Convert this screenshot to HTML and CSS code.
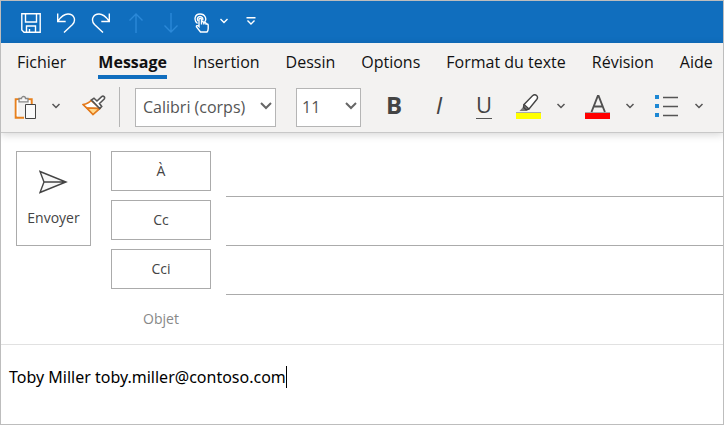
FILE: index.html
```html
<!DOCTYPE html>
<html lang="fr">
<head>
<meta charset="utf-8">
<title>Message</title>
<link rel="stylesheet" href="styles.css">
</head>
<body>
<div class="window">
  <header class="titlebar">
    <button class="quick" aria-label="Enregistrer"><svg width="20" height="20" viewBox="0 0 20 20"><path d="M.8.8h18.4v18.4H3L.8 17zM4.500 1v8h11V1M5.500 19v-6h9v6M8.500 19v-3"/></svg></button>
    <button class="quick" aria-label="Annuler"><svg width="20" height="20" viewBox="0 0 20 20"><path d="M1.700.5v8h8M2 8C5.500 3 9 1 12 1c6 0 8.500 6 4.500 10.500L8 19.500"/></svg></button>
    <button class="quick" aria-label="Rétablir"><svg width="20" height="20" viewBox="0 0 20 20"><path d="M18.300.5v8h-8M18 8C14.500 3 11 1 8 1 2 1-.5 7 3.500 11.500l8.500 8"/></svg></button>
    <button class="quick dim" aria-label="Élément précédent"><svg width="20" height="20" viewBox="0 0 20 20"><path d="M10 20V1M3.500 7.500 10 1l6.500 6.500"/></svg></button>
    <button class="quick dim" aria-label="Élément suivant"><svg width="20" height="20" viewBox="0 0 20 20"><path d="M10 0v19M3.500 12.500 10 19l6.500-6.500"/></svg></button>
    <button class="quick touch" aria-label="Mode tactile"><svg width="16" height="20" viewBox="0 0 16 20"><path d="M3.500 10.500C-.5 7.500.5 1 6 1s7 5.500 4.500 8M4.200 8C2.500 5.500 4 3.500 6 3.500S9.500 5.500 8.500 7.500"/><path d="M5 13.500V6.500c0-1.700 2.500-1.700 2.500 0v5-2c0-1.200 2.300-1.200 2.300.3v1.700-1.200c0-1.200 2.200-1 2.200.3v1.200c0-1.200 2.200-.9 2.200.3v3.400c0 2-1.200 3.500-1.200 3.500H6.500L2.500 14c-.5-1.500 1-2 2.500-.5z"/></svg></button>
    <button class="quick small" aria-label="Options du mode tactile"><svg width="10" height="6" viewBox="0 0 10 6"><path d="M1.500 1 5 4.500 8.500 1"/></svg></button>
    <button class="quick small" aria-label="Personnaliser"><svg width="10" height="8" viewBox="0 0 10 8"><path d="M.5.700h9M1.500 3.500 5 7l3.500-3.500"/></svg></button>
  </header>
  <div class="ribbon">
    <nav class="tabs">
      <a href="#">Fichier</a>
      <a href="#" class="active">Message</a>
      <a href="#">Insertion</a>
      <a href="#">Dessin</a>
      <a href="#">Options</a>
      <a href="#">Format du texte</a>
      <a href="#">Révision</a>
      <a href="#">Aide</a>
    </nav>
    <div class="tools">
      <div class="group clipboard">
        <button class="tool" aria-label="Coller"><svg width="22" height="25" viewBox="0 0 22 25"><path d="M10 22.800H1.700V4.200H5M14 4.200h3.700V9" fill="none" stroke="#e8811d" stroke-width="2"/><path d="M3.500 21V6h12v3" fill="none" stroke="#fff" stroke-width="1.500"/><path d="M5 6.800V3.500h2.500a2 2 0 0 1 4 0H14v3.300z" fill="#f7f7f7" stroke="#888" stroke-width="1.300"/><path d="M11.500 9.500h10v14h-10z" fill="#fafafa" stroke="#444"/></svg></button>
        <button class="tool arrow" aria-label="Options de collage"><svg width="10" height="6" viewBox="0 0 10 6"><path d="m1.500 1 3.500 3.500L8.500 1"/></svg></button>
      </div>
      <button class="tool brush" aria-label="Reproduire la mise en forme"><svg width="24" height="22" viewBox="0 0 24 22"><path d="M1 9.500C4 9 7 8 9 5.500l9 8-7 6z" fill="#fff" stroke="#e37a1d" stroke-width="1.400"/><path d="m5 13 12.500.5-6.500 6z" fill="#ffd98c" stroke="#e37a1d" stroke-width="1.400"/><path d="M1 9.500 5 13l12.500.5" fill="none" stroke="#e37a1d" stroke-width="1.400"/><path d="m9.500 5 2.500-1.800 3 2.800 4.700-4.300c1.700-1.500 3.700.6 2.500 2.300L17.500 8.500l2.200 3-2 2z" fill="#fff" stroke="#555" stroke-width="1.600"/></svg></button>
      <span class="divider"></span>
      <div class="picker family">
        <select aria-label="Police"><option>Calibri (corps)</option></select>
        <svg width="12" height="8" viewBox="0 0 12 8"><path d="m1 1 5 5 5-5"/></svg>
      </div>
      <div class="picker size">
        <select aria-label="Taille de police"><option>11</option></select>
        <svg width="12" height="8" viewBox="0 0 12 8"><path d="m1 1 5 5 5-5"/></svg>
      </div>
      <div class="group styles">
        <button class="tool letter bold" aria-label="Gras">B</button>
        <button class="tool letter italic" aria-label="Italique">I</button>
        <button class="tool letter" aria-label="Souligné"><span class="underlined">U</span></button>
      </div>
      <div class="group color">
        <button class="tool" aria-label="Surlignage"><svg width="25" height="26" viewBox="0 0 25 26"><path d="M0 18.500h25" stroke="#aaa"/><path d="M0 19h25v6H0z" fill="#ff0"/><path d="m8.500 11.500-5 5.500h7l2.500-1.500z" fill="#777"/><path d="m8 10.500 8.500-8.800c3-2.500 6.500.8 4.200 3.800L13 15z" fill="#fff" stroke="#444" stroke-width="1.400"/><path d="m8 10.500-.5 2.700 2.500 2.500L13 15" fill="none" stroke="#444" stroke-width="1.400"/></svg></button>
        <button class="tool arrow" aria-label="Couleurs de surlignage"><svg width="10" height="6" viewBox="0 0 10 6"><path d="m1.500 1 3.500 3.500L8.500 1"/></svg></button>
      </div>
      <div class="group color">
        <button class="tool" aria-label="Couleur de police"><svg width="25" height="26" viewBox="0 0 25 26"><path d="M0 18.500h25" stroke="#aaa"/><path d="M0 19h25v6H0z" fill="red"/><path d="M6.500 18 12.800 2h.8l6.300 16M8.800 12.500h8.800" fill="none" stroke="#505050" stroke-width="1.900"/></svg></button>
        <button class="tool arrow" aria-label="Couleurs de police"><svg width="10" height="6" viewBox="0 0 10 6"><path d="m1.500 1 3.500 3.500L8.500 1"/></svg></button>
      </div>
      <div class="group color bullets">
        <button class="tool" aria-label="Puces"><svg width="24" height="22" viewBox="0 0 24 22"><path d="M0 0h4v4H0zM0 9h4v4H0zM0 18h4v4H0z" fill="#1c88d4"/><path d="M8 2.500h15M8 11.500h15M8 20.500h15" stroke="#555" stroke-width="1.300"/></svg></button>
        <button class="tool arrow" aria-label="Style de puces"><svg width="10" height="6" viewBox="0 0 10 6"><path d="m1.500 1 3.500 3.500L8.500 1"/></svg></button>
      </div>
    </div>
  </div>
  <form class="compose">
    <button type="button" class="outlined send"><svg width="30" height="24" viewBox="0 0 30 24"><path d="M1 1.500 27 12 1 22.500 5 12zM5 12h21" fill="#f8f8f8" stroke="#444" stroke-width="1.400"/></svg>Envoyer</button>
    <div class="fields">
      <div class="field"><button type="button" class="outlined">À</button><input type="text" aria-label="À"></div>
      <div class="field"><button type="button" class="outlined">Cc</button><input type="text" aria-label="Cc"></div>
      <div class="field"><button type="button" class="outlined">Cci</button><input type="text" aria-label="Cci"></div>
      <div class="field subject"><label for="subject">Objet</label><input type="text" id="subject"></div>
    </div>
  </form>
  <main class="message"><p>Toby Miller toby.miller@contoso.com<span class="caret"></span></p></main>
</div>
</body>
</html>
```
FILE: styles.css
```css
* { box-sizing: border-box; }
body { margin: 0; font: 16px/24px "Open Sans", "Noto Sans", sans-serif; color: #111; }
button, input, select { font: inherit; color: inherit; margin: 0; padding: 0; border: 0; background: none; }
svg { display: block; flex: none; }
.window { display: flex; flex-direction: column; min-height: 100vh; border: 1px solid #bdbdbd; background: #fff; overflow: hidden; }

.titlebar { display: flex; align-items: center; gap: 15px; height: 42px; padding: 1px 20px 0; background: #106ebe; }
.quick { flex: none; }
.quick svg { fill: none; stroke: #fff; stroke-width: 1.4; }
.quick.dim svg { stroke: #2b88d8; }
.touch { margin-left: -2px; }
.small { margin-left: -6px; padding-bottom: 3px; }
.small + .small { margin-left: 2px; }

.ribbon { position: relative; background: #f3f2f1; border-bottom: 1px solid #c8c8c8; box-shadow: 0 2px 8px rgba(0, 0, 0, .16); }
.tabs { display: flex; gap: 26px; height: 44px; padding: 7px 16px 0; }
.tabs a { flex: none; height: 29px; color: inherit; text-decoration: none; white-space: nowrap; }
.tabs .active { margin-left: 6px; font-weight: 700; border-bottom: 4px solid #106ebe; }

.tools { display: flex; align-items: center; height: 40px; margin-bottom: 5px; padding-left: 13px; }
.group { display: flex; align-items: center; flex: none; }
.tool { display: flex; align-items: center; justify-content: center; flex: none; height: 38px; }
.tool svg { fill: none; }
.arrow svg { stroke: #555; stroke-width: 1.5; }
.arrow { padding-bottom: 3px; }
.clipboard { gap: 15px; }
.brush { margin-left: 21px; padding-bottom: 2px; }
.divider { flex: none; width: 1px; height: 40px; margin: 0 15px 0 13px; background: #b5b5b5; }
.picker { position: relative; flex: none; }
.picker select { appearance: none; display: block; width: 100%; height: 39px; padding-left: 7px; border: 1px solid #b5b5b5; border-radius: 0; background: #fff; color: #555; }
.picker svg { position: absolute; right: 4px; top: 14px; fill: none; stroke: #666; stroke-width: 2; pointer-events: none; }
.family { width: 141px; }
.size { width: 65px; margin-left: 20px; }
.size select { padding-left: 5px; }
.styles { gap: 25px; margin: 0 22px 0 23px; padding-bottom: 5px; }
.letter { width: 20px; font-size: 24px; line-height: 28px; color: #444; }
.bold { font-weight: 700; }
.italic { font-style: italic; }
.underlined { height: 29px; font-size: 22px; border-bottom: 1px solid #555; }
.color { gap: 15px; margin-right: 19px; }
.bullets { padding: 0 0 2px 1px; }
.bullets .arrow { padding-bottom: 1px; }

.compose { display: flex; padding: 15px 0 0 15px; border-bottom: 1px solid #e1e1e1; font-size: 14px; color: #444; }
.outlined { border: 1px solid #ababab; background: #fff; }
.send { display: flex; flex: none; flex-direction: column; align-items: center; gap: 12px; width: 75px; height: 95px; margin: 3px 20px 0 0; padding-top: 18px; }
.fields { flex: 1; min-width: 0; }
.field { display: grid; grid-template-columns: 100px 1fr; column-gap: 15px; height: 49px; }
.field .outlined { height: 40px; margin-top: 3px; }
.field input { min-width: 0; border-bottom: 1px solid #ababab; outline: 0; }
.subject { color: #888; text-align: center; line-height: 47px; }
.subject input { border: 0; }

.message { flex: 1; padding: 20px 8px; }
.message p { display: flex; align-items: center; margin: 0; color: #000; font-family: "Noto Sans", "Open Sans", sans-serif; }
.caret { width: 1px; height: 22px; background: #000; }
```
